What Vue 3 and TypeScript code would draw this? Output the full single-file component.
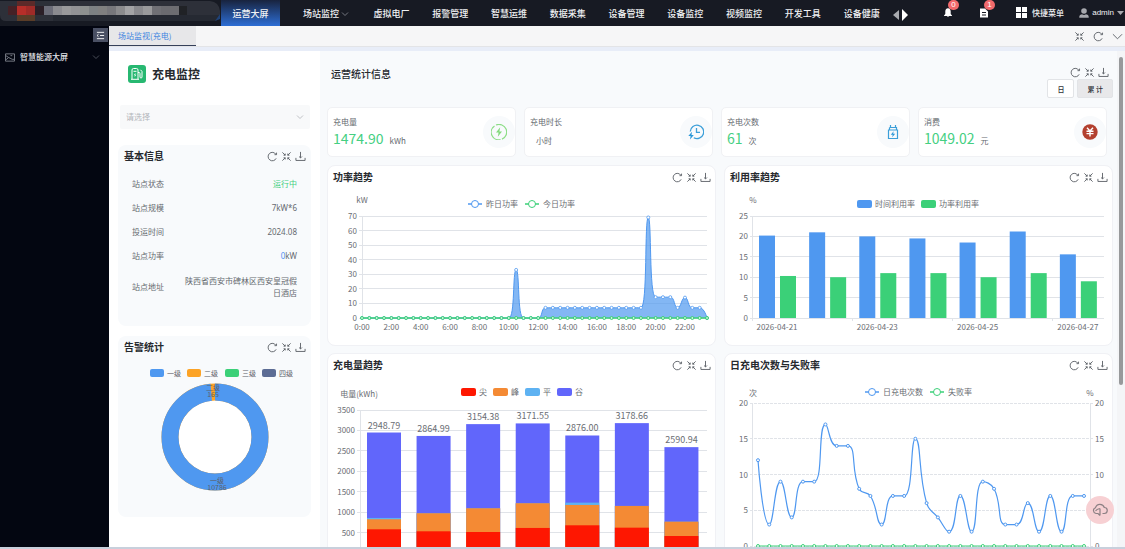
<script setup lang="ts">
import { defineComponent, h, ref } from 'vue'

interface Pt { x: number; y: number }
interface Info { label: string; value: string; kind?: string }

/* Refresh / fullscreen / download buttons shared by all panels */
const iconPaths: Record<string, string> = {
  refresh: 'M9.7 3.600A4.600 4.600 0 1 0 10 8M10.400 1.800V4H8.200',
  shrink: 'M1.500 1.500L4.600 4.600M4.600 2.800V4.600H2.800M10.500 1.500L7.400 4.600M7.400 2.800V4.600H9.200M1.500 10.500L4.600 7.400M2.800 7.400H4.600V9.200M10.500 10.500L7.400 7.400M9.200 7.400H7.400V9.200',
  download: 'M6 1V7.500M4.400 6L6 7.600L7.600 6M1 7.500V10.300H11V7.500',
}
const names: Record<string, string> = { refresh: '刷新', shrink: '全屏', download: '下载' }
const PanelTools = defineComponent({
  setup() {
    return () =>
      h('div', { class: 'tools' }, Object.keys(iconPaths).map((k) =>
        h('button', { type: 'button', class: 'tool', 'aria-label': names[k] }, [
          h('svg', { viewBox: '0 0 12 12' }, [h('path', { d: iconPaths[k] })]),
        ]),
      ))
  },
})

const navItems = ['虚拟电厂', '报警管理', '智慧运维', '数据采集', '设备管理', '设备监控', '视频监控', '开发工具', '设备健康']
const period = ref<'day' | 'total'>('total')
const station = ref('')

const mosaic = ['#6b6c78', '#8b8b90', '#99999b', '#929295', '#8d908f', '#7d8183', '#808080', '#77777b', '#8b8b8d', '#a3a3a5', '#8a8a8e', '#9a9a9c', '#707075', '#6b6b70']

const infos: Info[] = [
  { label: '站点状态', value: '运行中', kind: 'ok' },
  { label: '站点规模', value: '7kW*6' },
  { label: '投运时间', value: '2024.08' },
  { label: '站点功率', value: 'kW', kind: 'power' },
  { label: '站点地址', value: '陕西省西安市碑林区西安皇冠假日酒店', kind: 'address' },
]

const stats = [
  { label: '充电量', value: '1474.90', unit: 'kWh', icon: 'bolt' },
  { label: '充电时长', value: '', unit: '小时', icon: 'clock' },
  { label: '充电次数', value: '61', unit: '次', icon: 'battery' },
  { label: '消费', value: '1049.02', unit: '元', icon: 'yuan' },
]

const alarmLegend = [
  { name: '一级', color: '#4f98f0', x: 32 },
  { name: '二级', color: '#fca326', x: 69 },
  { name: '三级', color: '#3bd078', x: 107 },
  { name: '四级', color: '#5c6c94', x: 144 },
]
/* Ring drawn from 12 o'clock; level two fills the last part of the turn */
const ringLength = 2 * Math.PI * 45
const levelOne = (10786 / (165 + 10786)) * ringLength

/* Smoothed cubic path whose control points stay within neighbouring values */
function smooth(pts: Pt[]): string {
  const clamp = (v: number, a: number, b: number) => Math.max(Math.min(a, b), Math.min(Math.max(a, b), v))
  let d = `M${pts[0].x} ${pts[0].y}`
  let out: Pt = pts[0]
  for (let i = 1; i < pts.length; i++) {
    const p = pts[i]
    const prev = pts[i - 1]
    let inn: Pt = p
    let next: Pt = p
    if (i < pts.length - 1) {
      const n = pts[i + 1]
      const d0 = Math.hypot(p.x - prev.x, p.y - prev.y)
      const d1 = Math.hypot(n.x - p.x, n.y - p.y)
      const k = (0.5 * d1) / (d0 + d1)
      next = {
        x: clamp(p.x + (n.x - prev.x) * k, n.x, p.x),
        y: clamp(p.y + (n.y - prev.y) * k, n.y, p.y),
      }
      inn = {
        x: clamp(p.x - ((next.x - p.x) * d0) / d1, prev.x, p.x),
        y: clamp(p.y - ((next.y - p.y) * d0) / d1, prev.y, p.y),
      }
      next = { x: p.x + ((p.x - inn.x) * d1) / d0, y: p.y + ((p.y - inn.y) * d1) / d0 }
    }
    d += `C${out.x} ${out.y} ${inn.x} ${inn.y} ${p.x} ${p.y}`
    out = next
  }
  return d
}

/* Power trend, one sample per half hour */
const power: number[] = [
  ...Array<number>(21).fill(0), 33, 0, 0, 0,
  ...Array<number>(14).fill(7), 69, 14.3, 14.3, 14.3, 7, 14, 7, 7, 0,
]
const powerPts = power.map((v, i) => ({ x: 34 + (i * 345) / 47, y: 128 - (v * 102) / 70 }))
const powerLine = smooth(powerPts)
const powerArea = `${powerLine}L379 128L34 128Z`
const powerY = [0, 10, 20, 30, 40, 50, 60, 70].map((v) => ({ v, y: 128 - (v * 102) / 70 }))
const powerX = Array.from({ length: 12 }, (_, i) => ({ t: `${i * 2}:00`, x: 34 + (i * 4 * 345) / 47 }))

/* Utilisation */
const useY = [0, 5, 10, 15, 20, 25].map((v) => ({ v, y: 128 - (v * 102) / 25 }))
const useTime = [20.2, 21, 20, 19.5, 18.5, 21.2, 15.6]
const usePower = [10.3, 10, 11, 11, 10, 11, 9]
const useX = (i: number) => 27 + (i * 351) / 7
const useH = (v: number) => (v * 102) / 25
const useDates = [0, 2, 4, 6].map((i) => ({ t: `2026-04-${21 + i}`, x: useX(i) }))

/* Energy, stacked by tariff */
const energyLegend = [
  { name: '尖', color: '#fe1701' },
  { name: '峰', color: '#f48a34' },
  { name: '平', color: '#5eb2f2' },
  { name: '谷', color: '#6166fb' },
]
const energy = [
  [580, 826, 858, 2948.79], [531, 973, 973, 2864.99], [514, 1095, 1095, 3154.38],
  [613, 1218, 1218, 3171.55], [678, 1176, 1233, 2876], [620, 1152, 1152, 3178.66], [416, 767, 767, 2590.94],
]
const energyTop = (v: number) => 175 - (v * 143) / 3500
const energyY = [0, 500, 1000, 1500, 2000, 2500, 3000, 3500]
const energyX = (i: number) => 39 + (i * 347) / 7

/* Charge count and failure rate */
const counts = [12, 3, 9, 4, 9, 9, 17, 14, 14, 8, 7, 3, 7, 7, 15, 6, 4, 2, 7, 2, 9, 8, 3, 3, 6, 2, 7, 2, 7, 7]
const countPts = counts.map((v, i) => ({ x: 33 + (i * 326) / 29, y: 168 - (v * 143) / 20 }))
const countLine = smooth(countPts)
const countY = [0, 5, 10, 15, 20].map((v) => ({ v, y: 168 - (v * 143) / 20 }))
</script>

<template>
  <div class="app">
    <header class="top">
      <svg class="brand" viewBox="0 0 221 26" aria-hidden="true">
        <path d="M0 1H210Q219 2 220 11V18Q217 21 212 21H6Q0 21 0 15Z" fill="#2d3039" />
        <path d="M53 15H220V18Q217 21 212 21H53Z" fill="#252932" />
        <path d="M215 21L220 14V19Z" fill="#1f4277" />
        <rect x="8" y="6" width="9" height="9" fill="#452126" />
        <rect x="17" y="1" width="18" height="5" fill="#5c2a29" />
        <rect x="17" y="6" width="18" height="9" fill="#a02b28" />
        <rect x="17" y="6" width="9" height="9" fill="#b62e29" />
        <rect x="17" y="15" width="18" height="6" fill="#5a3d28" />
        <rect x="35" y="6" width="9" height="9" fill="#2b1f27" />
        <rect v-for="(c, i) in mosaic" :key="i" :x="44 + i * 9" y="6" width="9" height="9" :fill="c" />
        <rect x="170" y="6" width="9" height="9" fill="#6d6d71" />
        <rect x="179" y="6" width="8" height="9" fill="#202226" />
      </svg>
      <nav class="nav">
        <a href="#" class="nav-item current">运营大屏</a>
        <a href="#" class="nav-item sub">场站监控
          <svg class="chev" viewBox="0 0 8 8"><path d="M1 2.5L4 5.5L7 2.5" /></svg>
        </a>
        <a v-for="n in navItems" :key="n" href="#" class="nav-item grow">{{ n }}</a>
      </nav>
      <div class="top-right">
        <button type="button" class="plain arrows" aria-label="滚动菜单">
          <svg viewBox="0 0 16 12"><path d="M6 1V11L0 6Z" fill="#a9abb0" /><path d="M9 0V12L15 6Z" fill="#fff" /></svg>
        </button>
        <button type="button" class="plain notice" aria-label="通知">
          <svg viewBox="0 0 10 10"><path d="M5 0.8C6.8 1 7.7 2.4 7.7 4V6.4L9 8V8.4H1V8L2.300 6.400V4C2.300 2.400 3.200 1 5 0.800ZM3.800 8.800H6.200Q5 10.200 3.800 8.800Z" fill="#fff" /></svg>
          <span class="badge">0</span>
        </button>
        <button type="button" class="plain notice" aria-label="待办">
          <svg viewBox="0 0 10 10"><path fill-rule="evenodd" d="M1 1H6L9 4V10H1ZM3 4.500V5.500H7V4.500ZM3 7V8H7V7Z" fill="#fff" /></svg>
          <span class="badge">1</span>
        </button>
        <button type="button" class="plain quick">
          <svg viewBox="0 0 11 11"><path d="M0 0H5V5H0ZM6 0H11V5H6ZM0 6H5V11H0ZM6 6H11V11H6Z" fill="#fff" /></svg>
          快捷菜单
        </button>
        <button type="button" class="plain user">
          <svg class="face" viewBox="0 0 10 10"><circle cx="5" cy="3" r="2.800" /><path d="M0.300 9.700V8.500Q0.300 6.500 3 6.200Q5 7.600 7 6.200Q9.700 6.500 9.700 8.500V9.700Z" /></svg>
          admin
          <svg class="caret" viewBox="0 0 7 4"><path d="M0 0H7L3.500 4Z" /></svg>
        </button>
      </div>
    </header>

    <div class="body">
      <aside class="side">
        <button type="button" class="fold" aria-label="收起菜单">
          <svg viewBox="0 0 10 10"><path d="M1 1.500H9M4.500 5H9M1 8.500H9M2.800 3.600L1.200 5L2.800 6.400" /></svg>
        </button>
        <a href="#" class="side-item">
          <svg class="pic" viewBox="0 0 11 9"><path d="M0.500 0.500H10.500V8.500H0.500ZM1 2.500L4 4.500L1 7M4 4.500L8 6.500H10M6 2.500H8" /></svg>
          <span>智慧能源大屏</span>
          <svg class="chev" viewBox="0 0 8 8"><path d="M1 2.500L4 5.500L7 2.500" /></svg>
        </a>
      </aside>

      <main class="main">
        <div class="tabs">
          <a href="#" class="tab">场站监视(充电)</a>
          <div class="tab-tools">
            <button type="button" class="tool" aria-label="全屏"><svg viewBox="0 0 12 12"><path :d="iconPaths.shrink" /></svg></button>
            <button type="button" class="tool" aria-label="刷新"><svg viewBox="0 0 12 12"><path :d="iconPaths.refresh" /></svg></button>
            <button type="button" class="tool" aria-label="更多"><svg viewBox="0 0 12 12"><path d="M1 3.500L6 8.500L11 3.500" /></svg></button>
          </div>
        </div>

        <div class="view">
          <section class="left">
            <div class="brand-row">
              <svg class="pump" viewBox="0 0 18 18">
                <rect width="18" height="18" rx="3" fill="#27b871" />
                <path d="M4 14V5Q4 3.500 5.500 3.500H8.500Q10 3.500 10 5V14M3 14.300H11M5.500 6.300H8.500M10 7.500H11Q12 7.500 12 8.500V12Q12 13 13 13Q14 13 14 12V6.500L12.500 4.800" fill="none" stroke="#fff" />
                <path d="M7.500 7.800L5.800 10.300H7L6.500 12.300L8.300 9.700H7.200Z" fill="#fff" />
              </svg>
              <h1>充电监控</h1>
            </div>
            <div class="select-wrap">
              <select v-model="station" aria-label="选择站点"><option value="">请选择</option></select>
              <svg class="chev" viewBox="0 0 8 8"><path d="M1 2.500L4 5.500L7 2.500" /></svg>
            </div>

            <section class="box">
              <div class="head"><h2>基本信息</h2><PanelTools /></div>
              <dl class="info">
                <div v-for="r in infos" :key="r.label" class="row" :class="r.kind">
                  <dt>{{ r.label }}</dt>
                  <dd><span v-if="r.kind === 'power'" class="zero">0</span>{{ r.value }}</dd>
                </div>
              </dl>
            </section>

            <section class="box">
              <div class="head"><h2>告警统计</h2><PanelTools /></div>
              <svg class="chart" viewBox="0 0 193 157">
                <g v-for="l in alarmLegend" :key="l.name">
                  <rect :x="l.x" y="11" width="14" height="8" rx="2" :fill="l.color" />
                  <text :x="l.x + 17" y="18" class="t7">{{ l.name }}</text>
                </g>
                <circle cx="97" cy="79" r="37" fill="#fff" />
                <g transform="rotate(-90 97 79)" fill="none" stroke-width="17">
                  <circle cx="97" cy="79" r="45" stroke="#fca326" />
                  <circle cx="97" cy="79" r="45" stroke="#4f98f0" :stroke-dasharray="`${levelOne} ${ringLength - levelOne}`" />
                </g>
                <g class="t7" text-anchor="middle">
                  <text x="95" y="32">二级</text><text x="95" y="39">165</text>
                  <text x="99" y="125">一级</text><text x="99" y="132">10786</text>
                </g>
              </svg>
            </section>
          </section>

          <section class="right">
            <div class="overview">
              <h2>运营统计信息</h2>
              <div class="overview-actions">
                <PanelTools />
                <div class="period">
                  <button type="button" :class="{ on: period === 'day' }" @click="period = 'day'">日</button>
                  <button type="button" :class="{ on: period === 'total' }" @click="period = 'total'">累 计</button>
                </div>
              </div>
            </div>

            <div class="stats">
              <article v-for="s in stats" :key="s.label" class="stat">
                <div>
                  <p class="stat-label">{{ s.label }}</p>
                  <p class="stat-value"><b v-if="s.value">{{ s.value }}</b><span>{{ s.unit }}</span></p>
                </div>
                <span class="round">
                  <svg v-if="s.icon === 'bolt'" viewBox="0 0 16 16"><path d="M5 1A7.500 7.500 0 0 1 11 15.100M9.500 15.500A7.500 7.500 0 0 1 3.500 2" fill="none" stroke="#8ddd87" stroke-width="1.200" /><path d="M9.200 3.200L5 8.600H7.600L6.800 12.800L11 7.400H8.400Z" fill="#83da7c" /></svg>
                  <svg v-else-if="s.icon === 'clock'" viewBox="0 0 16 16"><path d="M2.300 7.500A6.700 6.700 0 1 1 5.800 13.800M8.500 4V8.300H12" fill="none" stroke="#3c9fd9" stroke-width="1.300" /><path d="M4 7.800L0.300 12H2.600L2 15.500L5.800 11H3.500Z" fill="#2b98d9" /></svg>
                  <svg v-else-if="s.icon === 'battery'" viewBox="0 0 16 16"><path d="M5.500 4V1M10.500 4V1M4.500 3.500H11.500V5.500M3.500 6H12.500V14.500H3.500ZM4.500 6V3.500" fill="none" stroke="#3c9fd9" stroke-width="1.200" /><path d="M8.600 7.200L5.800 10.700H7.700L7.200 13.300L10.200 9.700H8.200Z" fill="#2b98d9" /></svg>
                  <svg v-else viewBox="0 0 16 16"><circle cx="8" cy="8" r="7.700" fill="#b3402f" /><path d="M5 3.800L8 7L11 3.800M4.500 7.300H11.500M4.500 9.600H11.500M8 7V12.500" fill="none" stroke="#fff" stroke-width="1.400" /></svg>
                </span>
              </article>
            </div>

            <div class="charts">
              <section class="card">
                <div class="head"><h2>功率趋势</h2><PanelTools /></div>
                <svg class="chart" viewBox="0 0 387 155">
                  <text x="34" y="13" text-anchor="middle">kW</text>
                  <g stroke="#4f98f0"><path d="M140 14H154" stroke-width="1.500" /><circle cx="147" cy="14" r="3.500" fill="#fff" /></g>
                  <text x="158" y="17">昨日功率</text>
                  <g stroke="#3bd078"><path d="M197 14H211" stroke-width="1.500" /><circle cx="204" cy="14" r="3.500" fill="#fff" /></g>
                  <text x="215" y="17">今日功率</text>
                  <g v-for="t in powerY" :key="t.v">
                    <path :d="`M31 ${t.y}H379`" class="grid" />
                    <text x="29" :y="t.y + 3" text-anchor="end">{{ t.v }}</text>
                  </g>
                  <path d="M34 26V128" class="grid" />
                  <path :d="powerArea" fill="#4f98f0" fill-opacity=".7" />
                  <path :d="powerLine" fill="none" stroke="#4f98f0" />
                  <g fill="#fff" stroke="#4f98f0" stroke-width=".8"><circle v-for="(p, i) in powerPts" :key="i" :cx="p.x" :cy="p.y" r="1.500" /></g>
                  <path d="M34 128H379" stroke="#3bd078" stroke-width="1.500" />
                  <g fill="#cdf3dc" stroke="#3bd078"><circle v-for="(p, i) in powerPts" :key="i" :cx="p.x" cy="128" r="1.500" /></g>
                  <text v-for="t in powerX" :key="t.t" :x="t.x" y="140" text-anchor="middle">{{ t.t }}</text>
                </svg>
              </section>

              <section class="card">
                <div class="head"><h2>利用率趋势</h2><PanelTools /></div>
                <svg class="chart" viewBox="0 0 387 155">
                  <text x="28" y="13" text-anchor="middle">%</text>
                  <rect x="132" y="10" width="15" height="8" rx="2" fill="#4f98f0" />
                  <text x="150" y="17">时间利用率</text>
                  <rect x="196" y="10" width="15" height="8" rx="2" fill="#3bd078" />
                  <text x="214" y="17">功率利用率</text>
                  <g v-for="t in useY" :key="t.v">
                    <path :d="`M25 ${t.y}H379`" class="grid" />
                    <text x="23" :y="t.y + 3" text-anchor="end">{{ t.v }}</text>
                  </g>
                  <path d="M27 26V128" class="grid" />
                  <rect v-for="(v, i) in useTime" :key="'t' + i" :x="useX(i) + 7" :y="128 - useH(v)" width="16" :height="useH(v)" fill="#4f98f0" />
                  <rect v-for="(v, i) in usePower" :key="'p' + i" :x="useX(i) + 28" :y="128 - useH(v)" width="16" :height="useH(v)" fill="#3bd078" />
                  <g v-for="t in useDates" :key="t.t">
                    <path :d="`M${t.x} 128V131`" class="grid" />
                    <text :x="t.x + 25" y="140" text-anchor="middle">{{ t.t }}</text>
                  </g>
                </svg>
              </section>

              <section class="card">
                <div class="head"><h2>充电量趋势</h2><PanelTools /></div>
                <svg class="chart" viewBox="0 0 387 195">
                  <text x="31" y="19" text-anchor="middle">电量(kWh)</text>
                  <g v-for="(l, i) in energyLegend" :key="l.name">
                    <rect :x="133 + i * 32" y="10" width="15" height="8" rx="2" :fill="l.color" />
                    <text :x="151 + i * 32" y="17">{{ l.name }}</text>
                  </g>
                  <g v-for="v in energyY" :key="v">
                    <path :d="`M29 ${energyTop(v)}H379`" class="grid" />
                    <text x="27" :y="energyTop(v) + 3" text-anchor="end">{{ v }}</text>
                  </g>
                  <path d="M32 32V175" class="grid" />
                  <g v-for="(e, i) in energy" :key="i">
                    <rect v-for="k in [3, 2, 1, 0]" :key="k" :x="energyX(i)" :y="energyTop(e[k])" width="34" :height="175 - energyTop(e[k])" :fill="energyLegend[k].color" />
                    <text class="t9" :x="energyX(i) + 17" :y="energyTop(e[3]) - 4" text-anchor="middle">{{ e[3].toFixed(2) }}</text>
                  </g>
                </svg>
              </section>

              <section class="card">
                <div class="head"><h2>日充电次数与失败率</h2><PanelTools /></div>
                <svg class="chart" viewBox="0 0 387 195">
                  <text x="28" y="18" text-anchor="middle">次</text>
                  <text x="365" y="18" text-anchor="middle">%</text>
                  <g stroke="#4f98f0"><path d="M140 14H154" stroke-width="1.500" /><circle cx="147" cy="14" r="3.500" fill="#fff" /></g>
                  <text x="158" y="17">日充电次数</text>
                  <g stroke="#3bd078"><path d="M205 14H219" stroke-width="1.500" /><circle cx="212" cy="14" r="3.500" fill="#fff" /></g>
                  <text x="223" y="17">失败率</text>
                  <g v-for="t in countY" :key="t.v">
                    <path :d="`M25 ${t.y}H368`" class="grid" stroke-dasharray="3 1" />
                    <text x="23" :y="t.y + 3" text-anchor="end">{{ t.v }}</text>
                    <text x="370" :y="t.y + 3">{{ t.v }}</text>
                  </g>
                  <path d="M27 25V168M365 25V168" class="grid" />
                  <path :d="countLine" fill="none" stroke="#4f98f0" stroke-width="1.200" />
                  <g fill="#fff" stroke="#4f98f0"><circle v-for="(p, i) in countPts" :key="i" :cx="p.x" :cy="p.y" r="1.500" /></g>
                  <path d="M33 168H359" stroke="#3bd078" />
                  <g fill="#fff" stroke="#3bd078"><circle v-for="(p, i) in countPts" :key="i" :cx="p.x" cy="168" r="1.500" /></g>
                </svg>
              </section>
            </div>
          </section>
          <div class="scroll" aria-hidden="true"><i></i></div>
          <button type="button" class="float" aria-label="云下载">
            <svg viewBox="0 0 16 14"><path d="M6 10.500H4A3 3 0 0 1 3.500 4.700A4.600 4.600 0 0 1 12.300 4.500A3 3 0 0 1 12.200 10.500H10.500M8 5.500V12.500M6 10.500L8 12.500M8 5.500Q5 6 3.500 8" /></svg>
          </button>
        </div>
      </main>
    </div>
    <footer class="edge"></footer>
  </div>
</template>

<style>
html, body { margin: 0; overflow: hidden; }

.tools { display: flex; gap: 3px; }
.tool { width: 11px; height: 11px; padding: 0; border: 0; background: none; display: block; }
.tool svg { width: 11px; height: 11px; display: block; fill: none; stroke: #5c6067; stroke-width: 1; }
</style>

<style scoped>
.app {
  height: 100vh; display: flex; flex-direction: column; overflow: hidden;
  font-family: "Noto Sans CJK SC", "Noto Sans", sans-serif; font-size: 8px; line-height: 12px; color: #666a70;
}
* { box-sizing: border-box; }
h1, h2, p, dl, dd { margin: 0; }
a { text-decoration: none; color: inherit; }
button { font-family: inherit; }
svg { flex: none; }
.chev { width: 8px; height: 8px; fill: none; stroke: #8a8d95; stroke-width: .8; }

.top { height: 26px; flex: none; display: flex; background: #171a23; color: #f1f2f4; }
.brand { width: 221px; height: 26px; }
.nav { flex: 1; display: flex; min-width: 0; font-size: 9px; line-height: 26px; font-weight: 500; white-space: nowrap; }
.nav-item { padding: 1px 11px 0; }
.nav-item.current { width: 59px; margin-right: 12px; padding: 1px 0 0; text-align: center; background: linear-gradient(#18233e, #2d6ed5); }
.nav-item.sub { width: 70px; display: flex; align-items: center; gap: 2px; padding-right: 0; }
.nav-item.grow { flex: 1; padding: 1px 0 0; text-align: center; }
.top-right { width: 234px; display: flex; align-items: center; height: 25px; }
.plain { display: flex; align-items: center; padding: 0; border: 0; background: none; color: #f1f2f4; font-size: 8px; line-height: 12px; white-space: nowrap; }
.arrows { margin: 4px 0 0 2px; }
.arrows svg { width: 16px; height: 12px; }
.notice { position: relative; margin-left: 26px; }
.arrows + .notice { margin-left: 34px; }
.notice svg { width: 10px; height: 11px; }
.badge { position: absolute; left: 5px; top: -7px; width: 11px; height: 10px; border-radius: 5px; background: #f16a6c; color: #fff; line-height: 10px; text-align: center; font-family: "Liberation Sans", sans-serif; }
.quick { gap: 5px; margin-left: 27px; font-weight: 500; }
.quick svg { width: 11px; height: 11px; }
.user { gap: 3px; margin-left: auto; padding-right: 1px; font-family: "Liberation Sans", sans-serif; }
.face { width: 10px; height: 10px; fill: #a7a9ae; }
.caret { width: 7px; height: 4px; fill: #a7a9ae; }

.body { flex: 1; min-height: 0; display: flex; }
.side { width: 109px; flex: none; background: #030611; color: #e6e8ec; }
.fold { display: flex; align-items: center; justify-content: center; width: 15px; height: 14px; margin: 2px 1px 0 auto; padding: 0; border: 0; background: #4a5064; }
.fold svg { width: 9px; height: 9px; fill: none; stroke: #fff; }
.side-item { display: flex; align-items: center; gap: 5px; height: 24px; margin-top: 3px; padding: 0 9px 0 5px; font-weight: 500; }
.side-item span { flex: 1; }
.side-item .chev { stroke: #5a5e69; }
.pic { width: 10px; height: 9px; fill: none; stroke: #80848d; }

.main { flex: 1; min-width: 0; display: flex; flex-direction: column; background: #e8edf8; }
.tabs { height: 21px; flex: none; display: flex; justify-content: space-between; align-items: center; background: #f6f6f7; border-bottom: 1px solid #e3e4e7; }
.tab { height: 20px; width: 87px; padding-left: 9px; line-height: 20px; background: #e7e7e9; color: #4084e0; border-bottom: 1px solid #35405a; }
.tab-tools { display: flex; gap: 8px; padding-right: 2px; }

.view { position: relative; flex: 1; min-height: 0; margin-top: 4px; display: flex; align-items: stretch; overflow: hidden; background: #f8fafc; }
.left { width: 211px; flex: none; padding: 14px 9px 0; background: #fff; overflow: hidden; }
.brand-row { display: flex; align-items: center; gap: 6px; padding-left: 10px; height: 18px; }
.pump { width: 18px; height: 18px; }
h1 { font-size: 12px; line-height: 16px; font-weight: 700; color: #26292e; }
h2 { font-size: 10px; line-height: 14px; font-weight: 700; color: #26292e; }
.select-wrap { position: relative; margin: 22px 1px 0 2px; }
.select-wrap select { width: 100%; height: 24px; padding: 0 6px; border: 0; border-radius: 2px; appearance: none; background: #f8f9fa; color: #b3b6bb; font: 8px/24px "Noto Sans CJK SC", sans-serif; }
.select-wrap .chev { position: absolute; right: 6px; top: 8px; stroke: #b0b3b8; }
.box { margin-top: 16px; height: 181px; border-radius: 8px; background: #f8fafc; overflow: hidden; }
.box + .box { margin-top: 10px; }
.head { display: flex; align-items: center; justify-content: space-between; height: 24px; padding: 0 4px 2px 5px; }
.box .head { height: 22px; padding: 0 5px 0 6px; }
.info { padding: 5px 14px 0; font-family: "Noto Sans", "Noto Sans CJK SC", sans-serif; }
.row { display: flex; align-items: center; justify-content: space-between; min-height: 24px; }
.row.address { min-height: 38px; }
.row.address dd { max-width: 116px; text-align: right; }
.row.ok dd { color: #42cf80; }
.zero { color: #4f8ff0; }
.chart { display: block; width: 100%; height: auto; }
.chart text { font-size: 8px; fill: #6a6d73; }
.chart .t7, .chart .t7 text { font-size: 7px; fill: #5d6168; }
.chart .t9 { font-size: 9px; }
.grid { fill: none; stroke: #e0e3e8; shape-rendering: crispEdges; }

.right { flex: 1; min-width: 0; padding: 16px 4px 0 7px; }
.overview { display: flex; justify-content: space-between; height: 40px; padding-left: 4px; }
.overview h2 { font-weight: 500; }
.overview-actions { display: flex; flex-direction: column; align-items: flex-end; }
.overview-actions .tools { padding-right: 4px; }
.period { display: flex; gap: 3px; margin-top: 1px; }
.period button { height: 19px; min-width: 26px; padding: 0 9px; border: 1px solid #e2e4e7; border-radius: 2px; background: #fff; color: #303238; font-size: 7px; line-height: 16px; font-weight: 500; }
.period .on { background: #e8e8ea; }
.stats { display: grid; grid-template-columns: repeat(4, 1fr); gap: 8px; padding-right: 6px; }
.stat { display: flex; justify-content: space-between; align-items: center; height: 50px; padding: 0 0 0 5px; border: 1px solid #f0f1f4; border-radius: 5px; background: #fff; }
.stat-value { height: 20px; font-size: 14px; line-height: 20px; white-space: nowrap; }
.stat-value b { margin-right: 6px; font-weight: 400; color: #45cf82; }
.stat-value span { font-size: 8px; }
.stat-value span:first-child { margin-left: 6px; }
.round { display: flex; align-items: center; justify-content: center; width: 32px; height: 32px; border-radius: 50%; background: #f8fafc; }
.round svg { width: 16px; height: 16px; }
.charts { display: grid; grid-template-columns: repeat(2, 1fr); gap: 7px 8px; margin-top: 8px; }
.card { border: 1px solid #f0f1f5; border-radius: 8px; background: #fff; }

.scroll { width: 8px; flex: none; padding: 6px 2px 0; background: #f4f5f7; }
.scroll i { display: block; width: 4px; height: 67%; border-radius: 2px; background: #97999b; }
.float { position: absolute; right: 11px; bottom: 23px; width: 28px; height: 28px; display: flex; align-items: center; justify-content: center; padding: 0; border: 0; border-radius: 50%; background: #f7d0d3; }
.float svg { width: 16px; height: 14px; fill: none; stroke: #8c8084; stroke-width: 1.200; }
.edge { height: 2px; flex: none; background: #c8d0dc; }
</style>
